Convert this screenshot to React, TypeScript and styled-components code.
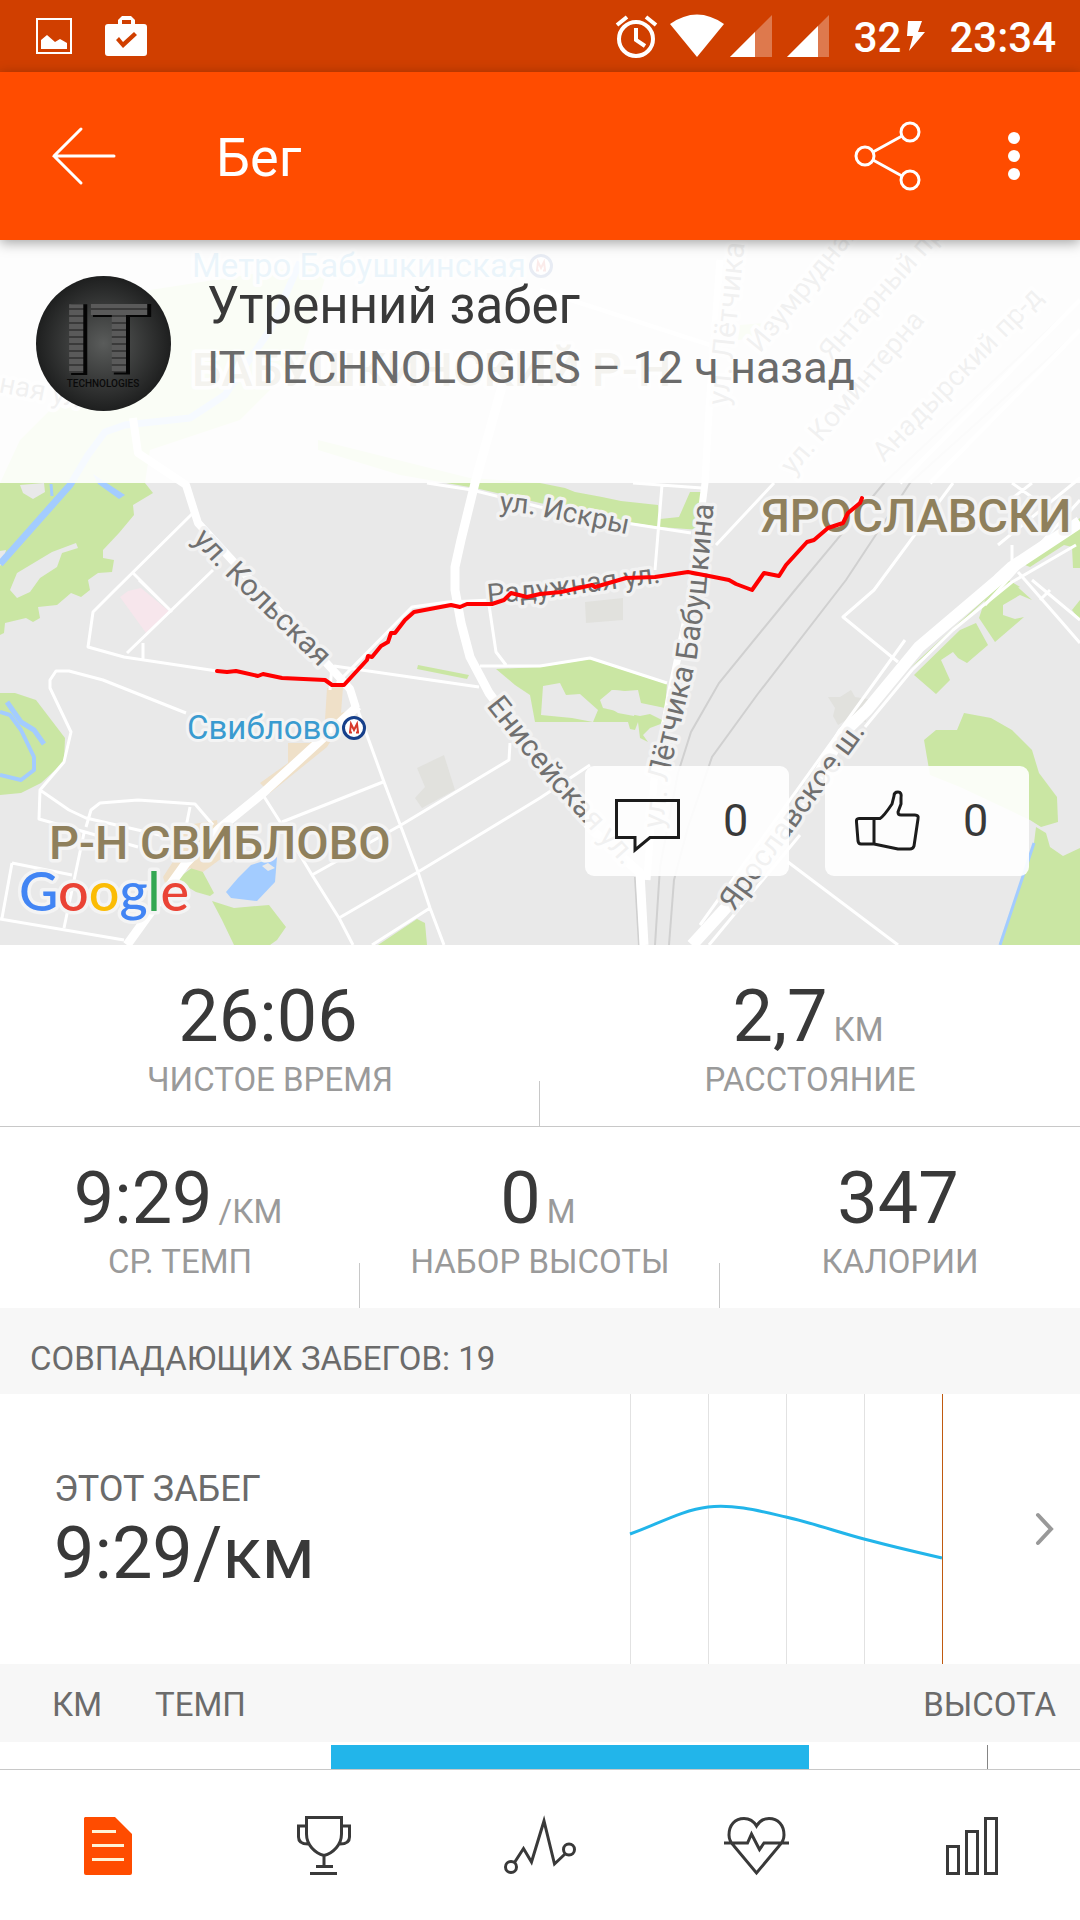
import React from "react";
import styled, { createGlobalStyle } from "styled-components";

const color = {
  brand: "#ff4c00",
  brandDark: "#d03f00",
  ink: "#393939",
  text: "#6b6b6b",
  muted: "#9a9a9a",
  rule: "#c8c8c8",
  band: "#f7f7f7",
  blue: "#22b5ea",
  land: "#e9e9e9",
  park: "#cae6a3",
  water: "#a3ccff",
};

const GlobalStyle = createGlobalStyle`
  *, *::before, *::after { box-sizing: border-box; }
  body { margin: 0; background: #fff; font-family: Roboto, "Noto Sans", sans-serif; color: ${color.ink}; }
  h1, h2, p, dl, dd, dt { margin: 0; font-weight: 400; }
  svg { display: block; flex: none; overflow: visible; }
`;

const Screen = styled.div`
  display: flex;
  flex-direction: column;
  min-height: 100vh;
`;

/* Status bar */

const StatusBar = styled.div`
  display: flex;
  align-items: center;
  justify-content: space-between;
  height: 72px;
  padding: 0 24px 0 36px;
  background: ${color.brandDark};
  color: #fff;
`;

const StatusGroup = styled.div<{ $gap: number }>`
  display: flex;
  align-items: center;
  gap: ${(p) => p.$gap}px;
`;

const StatusText = styled.span<{ $before: number }>`
  margin-left: ${(p) => p.$before}px;
  padding-top: 4px;
  font-size: 42px;
  font-weight: 500;
  line-height: 48px;
`;

/* App bar */

const AppBar = styled.header`
  position: relative;
  z-index: 2;
  display: flex;
  align-items: center;
  height: 168px;
  padding: 0 30px 0 48px;
  background: ${color.brand};
  box-shadow: 0 3px 12px rgba(0, 0, 0, 0.35);
  color: #fff;
`;

const IconButton = styled.button`
  display: flex;
  align-items: center;
  justify-content: center;
  width: 72px;
  height: 72px;
  padding: 0;
  border: 0;
  background: none;
  color: inherit;
`;

const BarTitle = styled.h1`
  flex: 1;
  margin-left: 96px;
  padding-top: 4px;
  font-size: 54px;
  line-height: 64px;
`;

const BarActions = styled.div`
  display: flex;
  gap: 54px;
`;

/* Map */

const MapPanel = styled.section`
  position: relative;
  height: 705px;
  overflow: hidden;
  background: ${color.land};
`;

const MapCanvas = styled.svg`
  width: 100%;
  height: 100%;
`;

const ActivityHeader = styled.div`
  position: absolute;
  inset: 0 0 auto 0;
  display: flex;
  gap: 36px;
  padding: 36px 36px 72px;
  background: rgba(255, 255, 255, 0.9);
`;

const ActivityText = styled.div`
  display: flex;
  flex-direction: column;
  gap: 2px;
`;

const ActivityTitle = styled.h2`
  font-size: 51px;
  line-height: 60px;
`;

const ActivityMeta = styled.p`
  color: ${color.text};
  font-size: 45px;
  line-height: 60px;
`;

const SocialBar = styled.div`
  position: absolute;
  right: 51px;
  bottom: 69px;
  display: flex;
  gap: 36px;
`;

const SocialButton = styled.button`
  display: flex;
  align-items: center;
  gap: 42px;
  width: 204px;
  height: 110px;
  padding: 0 0 0 30px;
  border: 0;
  border-radius: 9px;
  background: rgba(255, 255, 255, 0.9);
  color: ${color.ink};
  font: 400 45px/54px Roboto, "Noto Sans", sans-serif;
`;

/* Stats */

const StatRow = styled.dl<{ $ruled?: boolean }>`
  display: flex;
  border-bottom: ${(p) => (p.$ruled ? `1px solid ${color.rule}` : "0")};
`;

const StatCell = styled.div`
  display: flex;
  flex: 1;
  flex-direction: column-reverse;
  align-items: center;
  padding: 31px 0 24px;

  &:not(:last-child) {
    background: linear-gradient(${color.rule}, ${color.rule}) right bottom / 1px 45px no-repeat;
  }
`;

const StatValue = styled.dd`
  display: flex;
  align-items: baseline;
  gap: 6px;
  padding-right: 4px;
  font-size: 72px;
  line-height: 82px;
`;

const StatUnit = styled.span`
  color: ${color.muted};
  font-size: 33px;
  line-height: 40px;
`;

const StatLabel = styled.dt`
  color: ${color.muted};
  font-size: 33px;
  line-height: 44px;
`;

/* Matched runs */

const SectionTitle = styled.h2`
  padding: 31px 30px 15px;
  background: ${color.band};
  color: ${color.text};
  font-size: 33px;
  line-height: 40px;
`;

const MatchedLink = styled.a`
  display: flex;
  align-items: center;
  padding: 0 27px 0 54px;
  color: inherit;
  text-decoration: none;
`;

const MatchedText = styled.div`
  display: flex;
  flex: 1;
  flex-direction: column;
  gap: 2px;
  padding-top: 4px;
`;

const MatchedLabel = styled.span`
  color: ${color.text};
  font-size: 36px;
  line-height: 44px;
`;

const MatchedValue = styled.span`
  font-size: 72px;
  line-height: 82px;
`;

const ChevronBox = styled.span`
  margin-left: 92px;
`;

/* Splits */

const Splits = styled.table`
  width: 100%;
  border-collapse: collapse;
  table-layout: fixed;
  color: ${color.text};
  font-size: 33px;
  line-height: 40px;
`;

const SplitHead = styled.th<{ $end?: boolean; $inset?: number; $width?: number }>`
  width: ${(p) => (p.$width ? `${p.$width}px` : "auto")};
  padding: 21px ${(p) => (p.$end ? 24 : 0)}px 17px ${(p) => p.$inset ?? 0}px;
  background: ${color.band};
  font-weight: 400;
  text-align: ${(p) => (p.$end ? "right" : "left")};
`;

const SplitCell = styled.td<{ $inset?: number }>`
  padding: 3px 0 0 ${(p) => p.$inset ?? 0}px;
`;

const PaceBar = styled.div`
  height: 24px;
  background: ${color.blue};
`;

const ElevationTick = styled.div`
  height: 24px;
  border-left: 1px solid #858585;
`;

/* Bottom navigation */

const TabBar = styled.nav`
  position: sticky;
  bottom: 0;
  display: flex;
  margin-top: auto;
  border-top: 1px solid ${color.rule};
  background: #fff;
`;

const Tab = styled.button<{ $active?: boolean }>`
  display: flex;
  flex: 1;
  align-items: center;
  justify-content: center;
  height: 150px;
  padding: 0;
  border: 0;
  background: none;
  color: ${(p) => (p.$active ? color.brand : color.ink)};
`;

const tabs = [
  {
    name: "Обзор",
    active: true,
    art: (
      <>
        <path d="M10 5H40L57 22V61a2 2 0 0 1-2 2H11a2 2 0 0 1-2-2V6z" fill="currentColor" stroke="none" />
        <path d="M17 19.5H41M17 33.5H49M17 47.5H49" stroke="#fff3d6" />
      </>
    ),
  },
  {
    name: "Достижения",
    art: (
      <path d="M15.500 5.500H50.500V22C50.500 33 42 41 33 43.500C24 41 15.500 33 15.500 22ZM15 14H7.500V25C7.500 30 11 32 17 32M51 14H58.500V25C58.500 30 55 32 49 32M33 43V54M25 54.500H42M19 61.500H46" />
    ),
  },
  {
    name: "Анализ",
    art: (
      <>
        <circle cx="4" cy="55" r="5.500" />
        <circle cx="62" cy="37.500" r="5.500" />
        <path d="M7.500 50.500L16.500 36.500L24.500 50L37 9L47.500 52L58 42" />
      </>
    ),
  },
  {
    name: "Пульс",
    art: (
      <path d="M33.500 14C30 8 26 6.500 21 6.500C12 6.500 6 13 6 23C6 28 8 31 11 34L33.500 61L56 34C59 31 61 28 61 23C61 13 55 6.500 46 6.500C41 6.500 37 8 33.500 14ZM1 31H24.500L28.500 22L36.500 37.500L41 31H66" />
    ),
  },
  {
    name: "Графики",
    art: <path d="M8.500 34.500H19.500V61.500H8.500ZM27.500 19.500H38.500V61.500H27.500ZM46.500 6.500H57.500V61.500H46.500Z" />,
  },
];

const summaryRows = [
  [
    { label: "ЧИСТОЕ ВРЕМЯ", value: "26:06" },
    { label: "РАССТОЯНИЕ", value: "2,7", unit: "КМ" },
  ],
  [
    { label: "СР. ТЕМП", value: "9:29", unit: "/КМ" },
    { label: "НАБОР ВЫСОТЫ", value: "0", unit: "М" },
    { label: "КАЛОРИИ", value: "347" },
  ],
];

const parks = [
  "0,483 20,440 60,400 90,330 150,290 330,262 300,360 240,420 180,440 150,450 145,483 153,493 133,505 134,515 119,533 103,550 103,558 114,560 112,572 98,573 88,580 90,590 81,597 71,593 57,605 38,607 40,618 33,622 26,618 5,623 4,633 0,635",
  "318,440 390,458 470,478 540,483 565,488 575,492 602,497 621,501 658,505 660,519 679,517 690,492 702,492 700,530 660,527 620,521 540,503 475,488 400,475 318,450",
  "418,665 469,675 467,679 417,669",
  "496,669 540,667 590,659 667,684 665,708 641,703 638,690 625,691 612,690 600,700 603,708 625,713 640,716 650,714 666,722 650,728 643,735 648,742 640,738 638,722 635,730 630,729 628,722 535,722 530,695 515,685",
  "0,693 15,693 36,700 65,738 64,762 41,783 21,793 0,795",
  "176,880 198,863 214,893 210,896 196,892",
  "212,901 234,908 269,905 286,927 277,940 270,945 234,945 222,920",
  "378,945 417,919 425,923 427,945",
  "1012,582 1032,600 1020,595 1003,605 1003,615 1015,619 1024,617 995,642 979,618 985,600",
  "960,630 976,623 988,645 967,663 958,658 953,652 941,660 950,680 936,694 914,675",
  "910,668 1000,585 1012,582 985,600 930,652",
  "1020,563 1064,530 1080,518 1080,568 1073,568 1072,547 1064,545 1030,567",
  "998,588 1005,578 1020,587 1010,590",
  "1072,610 1080,600 1080,620",
  "924,740 936,730 957,730 964,713 991,718 1012,730 1032,750 1039,773 1057,797 1058,822 1041,827 1030,820 960,787 930,775",
  "1036,827 1046,833 1050,847 1063,856 1080,848 1080,945 1001,945 1034,843",
  "740,325 765,323 755,338 738,340",
];

const clearings = [
  "20,485 44,483 45,492 33,499 23,493",
  "17,573 52,552 76,543 78,548 62,553 57,567 40,578 30,592 17,598 10,590",
  "0,551 6,550 3,562 0,566",
  "541,715 543,686 560,683 566,695 580,694 598,710 593,722 572,718",
  "602,703 612,690 634,692 637,703 634,716 618,713",
];

const streets =
  "M193 513L115 590L93 612L88 647L124 657L217 671M133 573L172 612M213 570L127 653M139 580L172 612M143 643V660" +
  "M186 713L103 680L69 671L56 671L50 680V688L71 732L64 762L40 790L39 819L138 847M40 790L69 810L86 818L190 842M86 827L91 810L100 803L138 800L195 804L213 825M190 807L186 827M84 833L64 928" +
  "M12 863L72 875M12 863L2 918M0 919L124 940M334 666L479 687M356 705L384 782L418 872L430 908L444 945M263 795L282 825L312 875L339 918L353 945M282 822L383 782" +
  "M312 875L344 857L401 825L509 760L510 743M339 918L418 872L540 798L590 765M372 945L430 908M489 605L496 652L506 665M480 666H540L590 658L667 683" +
  "M337 683L412 607L448 602L492 600M427 483L472 490L540 507L626 523L691 533M633 483L702 488M662 485L655 570M774 483L716 545M953 483L874 590L843 617L898 662" +
  "M1012 483L1036 500L1020 510M1032 483L1010 500M1032 580L1080 620M1018 572L1060 620L1080 643M1040 600L1050 590M1012 545V565M788 862L898 945M998 545L1080 478M985 605L1080 500M330 690L332 665";

const fadedStreets = "M900 483L1080 300M930 483L1080 330M540 290L710 345";

type PathLabelProps = { id: string; d: string; children: string };

function PathLabel({ id, d, children }: PathLabelProps) {
  return (
    <>
      <path id={id} d={d} fill="none" stroke="none" />
      <text>
        <textPath href={`#${id}`}>{children}</textPath>
      </text>
    </>
  );
}

function MetroMark({ x, y }: { x: number; y: number }) {
  return (
    <g transform={`translate(${x} ${y})`} fill="none">
      <circle r="10.500" fill="#fff" stroke="#17408b" strokeWidth="3" />
      <path d="M-5 4.500H-2M-4 4L-3 -4L0 2L3 -4L4 4M2 4.500H5" stroke="#d8392b" strokeWidth="2" />
    </g>
  );
}

function RouteMap() {
  return (
    <MapCanvas viewBox="0 240 1080 705" preserveAspectRatio="xMidYMid slice" role="img" aria-label="Карта маршрута">
      <rect y="240" width="1080" height="705" fill={color.land} />
      {parks.map((points) => (
        <polygon key={points} points={points} fill={color.park} />
      ))}
      {clearings.map((points) => (
        <polygon key={points} points={points} fill={color.land} />
      ))}
      <polygon points="120,597 128,591 141,588 170,612 146,633" fill="#f7e6ec" />
      <g fill="#efe0c8">
        <polygon points="327,688 343,687 341,713 350,710 327,747 270,793 260,783 288,763 288,743 310,743 325,720" />
        <polygon points="176,827 217,820 222,858 203,872 190,868 165,883 163,877 176,857" />
      </g>
      <g fill="#e1e1dd">
        <polygon points="417,768 444,755 455,790 422,808 415,798 425,787" />
        <polygon points="585,602 623,598 623,620 586,623" />
        <polygon points="828,697 840,697 851,690 855,697 868,699 864,710 866,722 848,719 838,725 833,716 835,708" />
      </g>

      <g fill="none" stroke={color.water} strokeLinejoin="round">
        <path d="M0 564L70 485L88 455L105 432L125 425L190 418L225 395L270 330L300 262" strokeWidth="7" />
        <path d="M0 712L10 715L21 730L34 757V770L21 780L0 775" strokeWidth="4" />
        <path d="M7 702L21 722L34 730L44 744" strokeWidth="5" />
        <path d="M1034 843L1000 945M51 484L52 496" strokeWidth="3" />
      </g>
      <polygon points="93,474 125,495 119,499 98,484" fill={color.water} />
      <polygon points="226,892 238,878 251,865 277,857 275,882 257,901 231,898" fill={color.water} />
      <polygon points="262,866 268,863 275,868 268,871" fill={color.land} />

      <path
        d="M1080 300L884 483L795 590L719 683L691 732L678 773L660 867L655 945M1080 330L910 483L846 580L757 695L712 757L688 827L674 880L669 945M635 877L639 945"
        fill="none"
        stroke="#d0d0d0"
        strokeWidth="2"
      />
      <path d={streets} fill="none" stroke="#fff" strokeWidth="3" strokeLinejoin="round" />
      <path d={fadedStreets} fill="none" stroke="#fff" strokeWidth="4" />
      <g fill="none" stroke="#fff" strokeLinejoin="round">
        <path d="M133 418L138 453L186 485L198 523L331 668L350 689L356 708" strokeWidth="8" />
        <path d="M358 706L263 793L220 828L186 863L127 945" strokeWidth="9" />
        <path d="M515 350L501 390L475 483L461 540L455 567V590L461 623L470 657L489 693L592 830L640 873L644 945" strokeWidth="9" />
        <path d="M720 260L709 410L705 483L690 600L671 690L654 780L647 880" strokeWidth="7" />
        <path d="M1080 522L1012 567L998 580L919 647L867 710L843 733L788 827L733 900L692 945" strokeWidth="12" />
        <path d="M1076 545L1012 582L953 630L912 670L865 727M800 835L709 945M905 640L700 925" strokeWidth="3" />
      </g>

      <g fill="#707070" stroke="#f2f2f2" strokeWidth="7" strokeLinejoin="round" paintOrder="stroke" fontSize="30">
        <PathLabel id="kolskaya" d="M192 540L218 568L332 680">ул. Кольская</PathLabel>
        <PathLabel id="eniseyskaya" d="M486 706L545 780L640 884">Енисейская ул.</PathLabel>
        <PathLabel id="letchika" d="M663 829L669 775L697 655L706 590L716 480">ул. Лётчика Бабушкина</PathLabel>
        <PathLabel id="yaroslavskoe" d="M734 912L880 712">Ярославское ш.</PathLabel>
        <PathLabel id="letchika-north" d="M728 406L746 230">ул. Лётчика</PathLabel>
      </g>
      <g fill="#707070" stroke="#f2f2f2" strokeWidth="7" strokeLinejoin="round" paintOrder="stroke" fontSize="28">
        <PathLabel id="iskry" d="M499 511L530 514L650 539">ул. Искры</PathLabel>
        <PathLabel id="raduzhnaya" d="M488 604L540 599L680 580">Радужная ул.</PathLabel>
        <PathLabel id="izumrudnaya" d="M760 354L875 214">Изумрудная</PathLabel>
        <PathLabel id="yantarny" d="M831 362L950 228">Янтарный пр-д</PathLabel>
        <PathLabel id="kominterna" d="M793 476L940 304">ул. Коминтерна</PathLabel>
        <PathLabel id="anadyrsky" d="M884 463L1060 282">Анадырский пр-д</PathLabel>
        <PathLabel id="north-street" d="M-2 392L80 408">ная ул.</PathLabel>
      </g>
      <g fill="#8f805c" stroke="#f4f4f4" strokeWidth="7" strokeLinejoin="round" paintOrder="stroke" fontSize="47" fontWeight="500">
        <text x="761" y="532">ЯРОСЛАВСКИ</text>
        <text x="49" y="859">Р-Н СВИБЛОВО</text>
        <text x="192" y="386">БАБУШКИНСКИЙ Р-Н</text>
      </g>
      <g fill="#3a9bd0" stroke="#f4f4f4" strokeWidth="6" strokeLinejoin="round" paintOrder="stroke" fontSize="33">
        <text x="187" y="739">Свиблово</text>
        <text x="192" y="277">Метро Бабушкинская</text>
      </g>
      <MetroMark x={354} y={728} />
      <MetroMark x={541} y={266} />

      <path
        d="M217 671L227 672L236 671L258 676L263 674L282 678L325 680L332 685H344L355 673L367 660L368 656L372 657L381 646L388 642L391 633L395 633L405 620L414 612L451 605L460 607L467 604H492L504 600L511 593L527 597L540 594L561 592L592 585L595 587L626 578L655 577L688 572L709 576L729 580L736 584L752 590L764 573L779 576L786 565L807 542L814 540L828 528L843 523L848 513L860 503L862 498"
        fill="none"
        stroke="#ff0000"
        strokeWidth="4"
        strokeLinejoin="round"
        strokeLinecap="round"
      />
      <text x="19" y="911" fontFamily="Lato, sans-serif" fontSize="54" stroke="#f4f4f4" strokeWidth="7" strokeLinejoin="round" paintOrder="stroke" fontWeight="500">
        <tspan fill="#4285f4">G</tspan>
        <tspan fill="#ea4335">o</tspan>
        <tspan fill="#fbbc05">o</tspan>
        <tspan fill="#4285f4">g</tspan>
        <tspan fill="#34a853">l</tspan>
        <tspan fill="#ea4335">e</tspan>
      </text>
    </MapCanvas>
  );
}

function Avatar() {
  return (
    <svg width="135" height="135" viewBox="0 0 135 135" role="img" aria-label="IT Technologies">
      <defs>
        <radialGradient id="avatar-bg">
          <stop offset="0" stopColor="#5a5c5b" />
          <stop offset="1" stopColor="#1e1f1f" />
        </radialGradient>
        <pattern id="avatar-stripes" width="8" height="7" patternUnits="userSpaceOnUse">
          <rect width="8" height="7" fill="#5a5a5a" />
          <rect y="4" width="8" height="2" fill="#3a3a3a" />
        </pattern>
      </defs>
      <circle cx="67.500" cy="67.500" r="67.500" fill="url(#avatar-bg)" />
      <g fontSize="97" fontWeight="700">
        <text x="29" y="98" fill="#050505" stroke="#050505" strokeWidth="2">IT</text>
        <text x="26" y="97" fill="url(#avatar-stripes)">IT</text>
      </g>
      <text x="67" y="111" textAnchor="middle" fontSize="10" fontWeight="500" fill="#0a0a0a">TECHNOLOGIES</text>
    </svg>
  );
}

const pace = [140, 113, 123, 145, 164];

function PaceChart() {
  return (
    <svg width="313" height="270" viewBox="0 0 313 270" role="img" aria-label="Темп последних забегов">
      {pace.map((_, i) => (
        <rect key={i} x={i * 78} width="1" height="270" fill={i === pace.length - 1 ? "#c05a10" : "#e2e2e2"} />
      ))}
      <path
        d="M0 140C26 131 52 116 78 113C104 110 130 117 156 123C182 129 208 138 234 145C260 152 286 158 312 164"
        fill="none"
        stroke={color.blue}
        strokeWidth="3"
      />
    </svg>
  );
}

export default function App() {
  return (
    <Screen>
      <GlobalStyle />

      <StatusBar>
        <StatusGroup $gap={33}>
          <svg width="36" height="36" viewBox="0 0 36 36">
            <path d="M1 1H35V35H1Z" fill="none" stroke="#fff" strokeWidth="2" />
            <path d="M5 31V22L11 17L19 24L24 21L31 25V31Z" fill="#fff" />
          </svg>
          <svg width="42" height="42" viewBox="0 0 42 42">
            <path
              fillRule="evenodd"
              fill="#fff"
              d="M13 9V5L17 1H26L30 5V9H39a3 3 0 0 1 3 3V38a3 3 0 0 1-3 3H3a3 3 0 0 1-3-3V12a3 3 0 0 1 3-3ZM17 9H26V5H17ZM11 25L18 33L32 20L29 17L18 27L14 22Z"
            />
          </svg>
        </StatusGroup>
        <StatusGroup $gap={6}>
          <svg width="48" height="44" viewBox="0 0 48 44" fill="none" stroke="#fff" strokeWidth="4">
            <circle cx="20" cy="25" r="17" />
            <path d="M20 14V26L29 32M1 11L11 3M30 3L40 11" />
          </svg>
          <svg width="54" height="44" viewBox="0 0 54 44">
            <path d="M0 10Q27 -9 54 10L27 43Z" fill="#fff" />
          </svg>
          <svg width="51" height="44" viewBox="0 0 51 44" fill="#fff">
            <path d="M0 43L42 1V43Z" opacity="0.300" />
            <path d="M0 43L25 18V43Z" />
          </svg>
          <svg width="51" height="44" viewBox="0 0 51 44" fill="#fff">
            <path d="M0 43L42 1V43Z" opacity="0.300" />
            <path d="M0 43L31 12V43Z" />
          </svg>
          <StatusText $before={10}>32</StatusText>
          <svg width="18" height="30" viewBox="0 0 18 30">
            <path d="M1 0H15L11 11H18L2 30L6 15H0Z" fill="#fff" />
          </svg>
          <StatusText $before={18}>23:34</StatusText>
        </StatusGroup>
      </StatusBar>

      <AppBar>
        <IconButton type="button" aria-label="Назад">
          <svg width="66" height="58" viewBox="0 0 66 58" fill="none" stroke="#fff" strokeWidth="3" strokeLinecap="round">
            <path d="M3 29H63M30 2L3 29L30 56" />
          </svg>
        </IconButton>
        <BarTitle>Бег</BarTitle>
        <BarActions>
          <IconButton type="button" aria-label="Поделиться">
            <svg width="66" height="70" viewBox="0 0 66 70" fill="none" stroke="#fff" strokeWidth="3">
              <circle cx="10" cy="35" r="9" />
              <circle cx="55" cy="11" r="9" />
              <circle cx="55" cy="59" r="9" />
              <path d="M18 31L47 15M18 39L47 55" />
            </svg>
          </IconButton>
          <IconButton type="button" aria-label="Ещё">
            <svg width="12" height="48" viewBox="0 0 12 48" fill="#fff">
              <circle cx="6" cy="6" r="6" />
              <circle cx="6" cy="24" r="6" />
              <circle cx="6" cy="42" r="6" />
            </svg>
          </IconButton>
        </BarActions>
      </AppBar>

      <main>
        <MapPanel>
          <RouteMap />
          <ActivityHeader>
            <Avatar />
            <ActivityText>
              <ActivityTitle>Утренний забег</ActivityTitle>
              <ActivityMeta>IT TECHNOLOGIES – 12 ч назад</ActivityMeta>
            </ActivityText>
          </ActivityHeader>
          <SocialBar>
            <SocialButton type="button" aria-label="Комментарии: 0">
              <svg width="66" height="66" viewBox="0 0 66 66" fill="none" stroke="#1c1c1c" strokeWidth="3">
                <path d="M1.500 12.500H63.500V49.500H35L20 62V49.500H1.500Z" />
              </svg>
              0
            </SocialButton>
            <SocialButton type="button" aria-label="Нравится: 0">
              <svg width="66" height="66" viewBox="0 0 66 66" fill="none" stroke="#1c1c1c" strokeWidth="3" strokeLinejoin="round">
                <path d="M19 30.500H4Q1 30.500 1.500 34L3 53Q3.500 56 6 56H19ZM19 30.500H25Q29 28 37 16L39 8Q39 4 43 4Q47 4 46 10V16L43 24Q43 27 46 27H60Q64 27 63 31L59 58Q58 61 55 61H43L19 56" />
              </svg>
              0
            </SocialButton>
          </SocialBar>
        </MapPanel>

        {summaryRows.map((row, i) => (
          <StatRow key={i} $ruled={i === 0}>
            {row.map((stat) => (
              <StatCell key={stat.label}>
                <StatLabel>{stat.label}</StatLabel>
                <StatValue>
                  {stat.value}
                  {stat.unit && <StatUnit>{stat.unit}</StatUnit>}
                </StatValue>
              </StatCell>
            ))}
          </StatRow>
        ))}

        <SectionTitle>СОВПАДАЮЩИХ ЗАБЕГОВ: 19</SectionTitle>
        <MatchedLink href="#matched">
          <MatchedText>
            <MatchedLabel>ЭТОТ ЗАБЕГ</MatchedLabel>
            <MatchedValue>9:29/км</MatchedValue>
          </MatchedText>
          <PaceChart />
          <ChevronBox>
            <svg width="18" height="32" viewBox="0 0 18 32" fill="none" stroke="#999" strokeWidth="4" strokeLinecap="round">
              <path d="M3 2L16 16L3 30" />
            </svg>
          </ChevronBox>
        </MatchedLink>

        <Splits>
          <thead>
            <tr>
              <SplitHead $width={155} $inset={52}>КМ</SplitHead>
              <SplitHead>ТЕМП</SplitHead>
              <SplitHead $width={271} $end>ВЫСОТА</SplitHead>
            </tr>
          </thead>
          <tbody>
            <tr>
              <SplitCell />
              <SplitCell $inset={176}>
                <PaceBar />
              </SplitCell>
              <SplitCell $inset={178}>
                <ElevationTick />
              </SplitCell>
            </tr>
          </tbody>
        </Splits>
      </main>

      <TabBar>
        {tabs.map((tab) => (
          <Tab key={tab.name} type="button" aria-label={tab.name} $active={tab.active}>
            <svg width="66" height="66" viewBox="0 0 66 66" fill="none" stroke="currentColor" strokeWidth="3">
              {tab.art}
            </svg>
          </Tab>
        ))}
      </TabBar>
    </Screen>
  );
}
